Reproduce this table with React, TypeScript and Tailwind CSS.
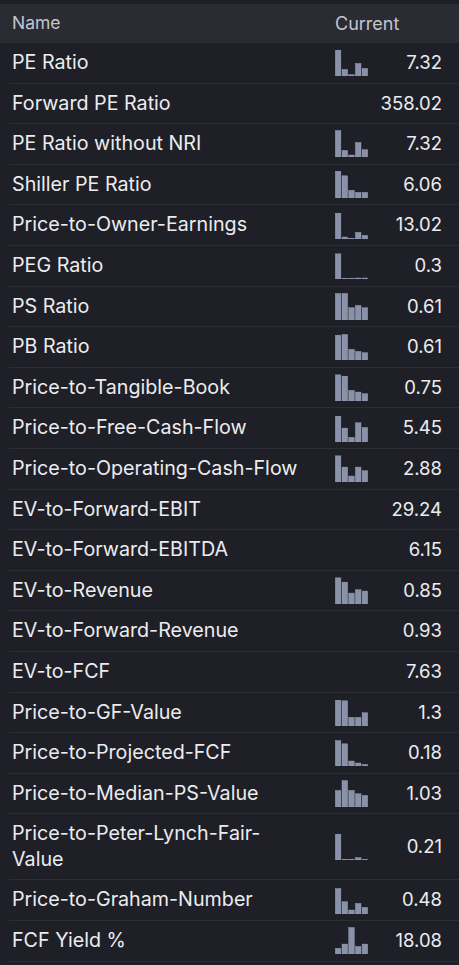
const ROWS: { name: React.ReactNode; value: string; bars?: number[] }[] = [
  { name: "PE Ratio", value: "7.32", bars: [78, 20, 4, 38, 23] },
  { name: "Forward PE Ratio", value: "358.02" },
  { name: "PE Ratio without NRI", value: "7.32", bars: [80, 20, 6, 44, 22] },
  { name: "Shiller PE Ratio", value: "6.06", bars: [81, 67, 23, 17, 17] },
  { name: "Price-to-Owner-Earnings", value: "13.02", bars: [78, 6, 2, 20, 11] },
  { name: "PEG Ratio", value: "0.3", bars: [76, 2, 1, 3, 3] },
  { name: "PS Ratio", value: "0.61", bars: [80, 80, 37, 44, 37] },
  { name: "PB Ratio", value: "0.61", bars: [75, 77, 32, 26, 22] },
  { name: "Price-to-Tangible-Book", value: "0.75", bars: [79, 75, 32, 27, 22] },
  { name: "Price-to-Free-Cash-Flow", value: "5.45", bars: [78, 42, 14, 58, 44] },
  { name: "Price-to-Operating-Cash-Flow", value: "2.88", bars: [79, 45, 18, 45, 34] },
  { name: "EV-to-Forward-EBIT", value: "29.24" },
  { name: "EV-to-Forward-EBITDA", value: "6.15" },
  { name: "EV-to-Revenue", value: "0.85", bars: [79, 66, 33, 43, 39] },
  { name: "EV-to-Forward-Revenue", value: "0.93" },
  { name: "EV-to-FCF", value: "7.63" },
  { name: "Price-to-GF-Value", value: "1.3", bars: [78, 76, 26, 26, 40] },
  { name: "Price-to-Projected-FCF", value: "0.18", bars: [77, 67, 15, 9, 5] },
  { name: "Price-to-Median-PS-Value", value: "1.03", bars: [50, 80, 50, 40, 35] },
  { name: <>Price-to-Peter-Lynch-Fair-<br />Value</>, value: "0.21", bars: [78, 2, 1, 7, 2] },
  { name: "Price-to-Graham-Number", value: "0.48", bars: [77, 37, 12, 32, 20] },
  { name: "FCF Yield %", value: "18.08", bars: [17, 30, 80, 23, 30] },
];

function Spark({ bars }: { bars: number[] }) {
  // 3x-scale heights from the design, max 80 -> 26.5px
  return (
    <svg width="34" height="27" viewBox="0 0 34 27" className="block">
      {bars.map((h, i) => {
        const ph = Math.max(0.8, (h / 80) * 26.5);
        return (
          <rect
            key={i}
            x={0.3 + i * 6.7}
            y={27 - ph}
            width={5.6}
            height={ph}
            fill="#8a92a9"
            stroke="#9ba3b8"
            strokeWidth={0.4}
          />
        );
      })}
    </svg>
  );
}

export default function App() {
  return (
    <div
      className="min-h-screen w-full bg-[#1f2027] pt-[4px] text-[#ececef]"
      style={{ fontFamily: "Inter, 'Noto Sans', sans-serif" }}
    >
      <div className="flex h-[39px] items-center bg-[#2a2b33] text-[17.5px] text-[#c3c6cf]">
        <div className="w-[335px] pl-[12px]">Name</div>
        <div className="text-[18px]">Current</div>
      </div>
      <div className="ml-[9px]">
        {ROWS.map((r, i) => (
          <div
            key={i}
            className="flex items-center border-b border-[#2c2d35] py-[7px] pl-[3px] pr-[17px]"
          >
            <div className="w-[323px] shrink-0 text-[19.7px] leading-[25.6px]">{r.name}</div>
            <div className="flex h-[25.6px] w-[34px] shrink-0 items-center justify-center">
              {r.bars && <Spark bars={r.bars} />}
            </div>
            <div className="flex-1 text-right text-[18.5px] leading-[25.6px]">{r.value}</div>
          </div>
        ))}
      </div>
    </div>
  );
}
